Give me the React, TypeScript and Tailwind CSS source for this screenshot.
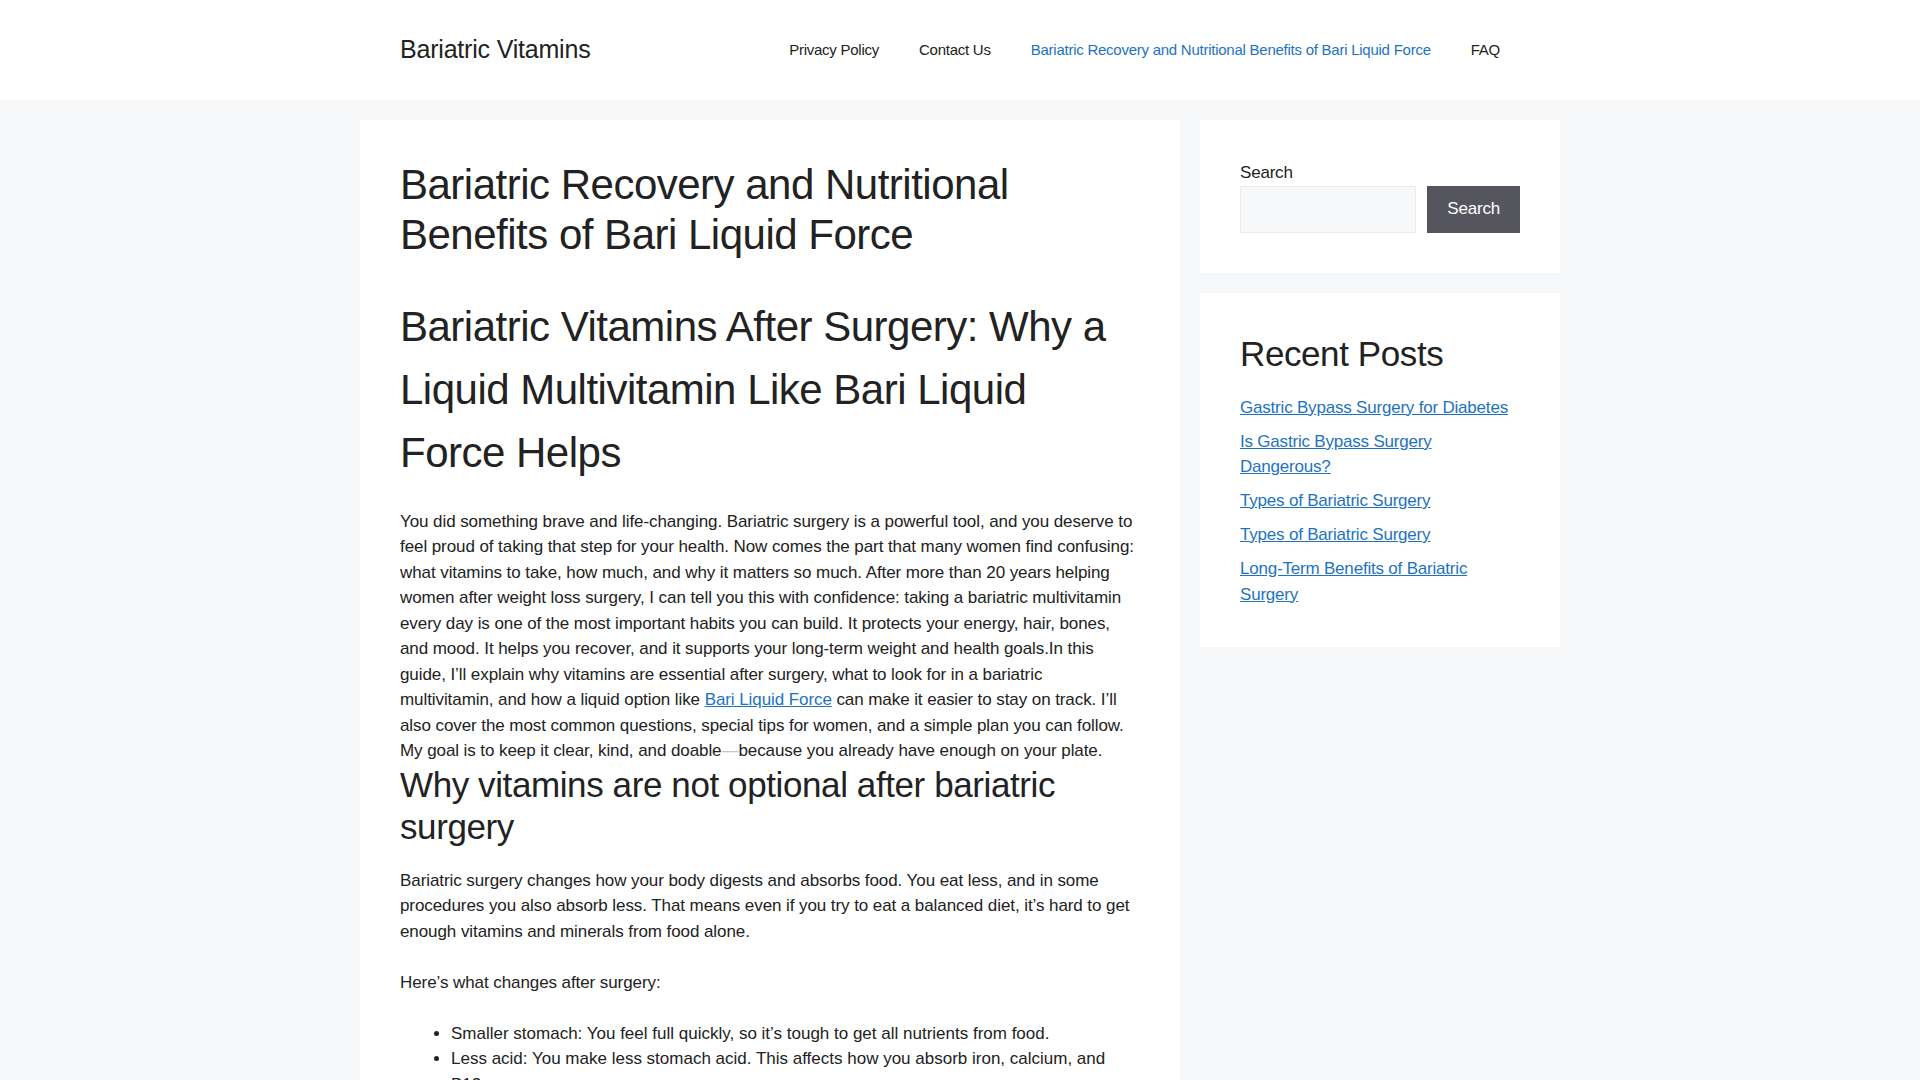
import React from 'react';

const navItems = [
  { label: 'Privacy Policy', current: false },
  { label: 'Contact Us', current: false },
  { label: 'Bariatric Recovery and Nutritional Benefits of Bari Liquid Force', current: true },
  { label: 'FAQ', current: false },
];

const recentPosts = [
  'Gastric Bypass Surgery for Diabetes',
  'Is Gastric Bypass Surgery Dangerous?',
  'Types of Bariatric Surgery',
  'Types of Bariatric Surgery',
  'Long-Term Benefits of Bariatric Surgery',
];

function Header() {
  return (
    <header className="bg-white">
      <div className="mx-auto flex w-[1200px] items-center justify-between px-10 py-5">
        <a href="#" className="text-[25px] leading-[1.5] tracking-[-0.2px] text-[#222]">
          Bariatric Vitamins
        </a>
        <nav>
          <ul className="flex text-[15px] tracking-[-0.25px]">
            {navItems.map((item) => (
              <li key={item.label}>
                <a
                  href="#"
                  className={`block px-5 leading-[60px] ${item.current ? 'text-[#1e73be]' : 'text-[#222]'}`}
                >
                  {item.label}
                </a>
              </li>
            ))}
          </ul>
        </nav>
      </div>
    </header>
  );
}

function Article() {
  return (
    <article className="w-[820px] bg-white p-10">
      <h1 className="text-[42px] leading-[1.2] tracking-[-0.5px]">
        Bariatric Recovery and Nutritional Benefits of Bari Liquid Force
      </h1>
      <div className="mt-[34px] tracking-[-0.08px]">
        <h2 className="mb-[25px] text-[42px] leading-[1.5] tracking-[-0.5px]">
          Bariatric Vitamins After Surgery: Why a Liquid Multivitamin Like Bari Liquid Force Helps
        </h2>
        <p>
          You did something brave and life-changing. Bariatric surgery is a powerful tool, and you deserve to
          feel proud of taking that step for your health. Now comes the part that many women find confusing:
          what vitamins to take, how much, and why it matters so much. After more than 20 years helping women
          after weight loss surgery, I can tell you this with confidence: taking a bariatric multivitamin every
          day is one of the most important habits you can build. It protects your energy, hair, bones, and
          mood. It helps you recover, and it supports your long-term weight and health goals.In this guide,
          I’ll explain why vitamins are essential after surgery, what to look for in a bariatric multivitamin,
          and how a liquid option like{' '}
          <a href="#" className="text-[#1e73be] underline">
            Bari Liquid Force
          </a>{' '}
          can make it easier to stay on track. I’ll also cover the most common questions, special tips for
          women, and a simple plan you can follow. My goal is to keep it clear, kind, and doable
          <span className="text-[#c8c8c8]">—</span>because you already have enough on your plate.
        </p>
        <h2 className="mb-5 text-[35px] leading-[1.2] tracking-[-0.4px]">
          Why vitamins are not optional after bariatric surgery
        </h2>
        <p className="mb-[25.5px]">
          Bariatric surgery changes how your body digests and absorbs food. You eat less, and in some procedures
          you also absorb less. That means even if you try to eat a balanced diet, it’s hard to get enough
          vitamins and minerals from food alone.
        </p>
        <p className="mb-[25.5px]">Here’s what changes after surgery:</p>
        <ul className="mb-[25.5px] ml-[51px] list-disc tracking-normal">
          <li>Smaller stomach: You feel full quickly, so it’s tough to get all nutrients from food.</li>
          <li>Less acid: You make less stomach acid. This affects how you absorb iron, calcium, and B12.</li>
          <li>Bypassed intestine: Some surgeries skip the part of the gut that absorbs many nutrients.</li>
          <li>Lower intake: Smaller portions mean fewer vitamins and minerals every day.</li>
        </ul>
      </div>
    </article>
  );
}

function Sidebar() {
  return (
    <aside className="flex w-[360px] flex-col gap-5">
      <div className="bg-white p-10">
        <label className="block">Search</label>
        <div className="flex gap-[11px]">
          <input
            type="search"
            className="h-[47px] min-w-0 flex-1 border border-[#ececec] bg-[#f7f8f9] px-2 outline-none"
          />
          <button className="h-[47px] bg-[#55555e] px-5 text-white">Search</button>
        </div>
      </div>
      <div className="bg-white p-10">
        <h2 className="mb-5 text-[35px] leading-[1.2] tracking-[-0.4px]">Recent Posts</h2>
        <ul className="flex flex-col gap-[8.5px]">
          {recentPosts.map((post, i) => (
            <li key={i}>
              <a href="#" className="text-[#1e73be] underline">
                {post}
              </a>
            </li>
          ))}
        </ul>
      </div>
    </aside>
  );
}

export default function App() {
  return (
    <div className="min-h-screen bg-[#f7f8f9] font-['Liberation_Sans',Arial,sans-serif] text-[17px] leading-[1.5] tracking-[-0.2px] text-[#222]">
      <Header />
      <div className="mx-auto mt-5 flex w-[1200px] items-start gap-5">
        <Article />
        <Sidebar />
      </div>
    </div>
  );
}
